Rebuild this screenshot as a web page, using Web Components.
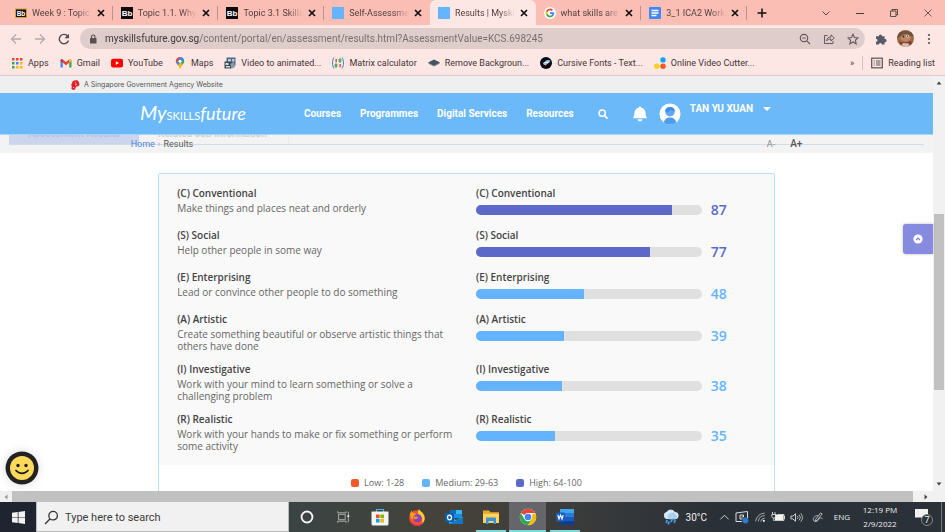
<!DOCTYPE html>
<html lang="en">
<head>
<meta charset="utf-8">
<title>Results | MySkillsFuture</title>
<style>
html,body{height:100%;margin:0}
body{font-family:Roboto,"Liberation Sans",sans-serif;font-size:9px;color:#3c3638;overflow:hidden}
</style>
</head>
<body>
<desktop-screen></desktop-screen>
<script>
const BASE = `*{box-sizing:border-box}button{font:inherit;color:inherit;background:none;border:0;padding:0;margin:0;display:flex;align-items:center;justify-content:center}a{color:inherit;text-decoration:none}svg{display:block;flex:none}ul{list-style:none;margin:0;padding:0}`;
function define(tag, css, html) {
  customElements.define(tag, class extends HTMLElement {
    constructor() {
      super();
      this.attachShadow({mode: 'open'});
    }
    connectedCallback() {
      const t = document.createElement('template');
      t.innerHTML = `<style>${BASE}${css}</style>` + (typeof html === 'function' ? html(this) : html);
      this.shadowRoot.replaceChildren(t.content.cloneNode(true));
    }
  });
}

const chromeLogo = `<circle cx="12" cy="12" r="11" fill="#fff"/><path d="M12 12 2.5 6.5A11 11 0 0 1 21.500 6.500H12z" fill="#ea4335"/><path d="M12 12 21.500 6.500A11 11 0 0 1 12 23l4.800-8.300z" fill="#fbbc05"/><path d="M12 12l4.800 2.700L12 23A11 11 0 0 1 2.500 6.500L7.200 14.700z" fill="#34a853"/><circle cx="12" cy="12" r="5.500" fill="#fff"/><circle cx="12" cy="12" r="4.400" fill="#4285f4"/>`;
const ICONS = {
  goldbb: ['0 0 12 12', `<rect x="0.500" y="2" width="11" height="8.500" fill="#111" stroke="#d4a22c"/><text x="6" y="8.800" font-size="6.500" font-weight="700" fill="#fff" text-anchor="middle">Bb</text>`],
  bb: ['0 0 12 12', `<rect width="12" height="12" fill="#0b0b0b"/><text x="6" y="9" font-size="8" font-weight="700" fill="#fff" text-anchor="middle">Bb</text>`],
  blue: ['0 0 12 12', `<rect width="12" height="12" fill="#64b5fd"/>`],
  google: ['0 0 24 24', `<circle cx="12" cy="12" r="12" fill="#fff"/><g transform="translate(2.400 2.400) scale(.8)"><path fill="#4285f4" d="M22.600 12.300c0-.8-.1-1.500-.2-2.300H12v4.300h6c-.3 1.400-1.100 2.500-2.200 3.300v2.800h3.600c2-1.900 3.200-4.700 3.200-8.100z"/><path fill="#34a853" d="M12 23c3 0 5.500-1 7.300-2.700l-3.600-2.800c-1 .7-2.200 1.100-3.700 1.100-2.900 0-5.300-1.900-6.200-4.500H2.200v2.800A11 11 0 0 0 12 23z"/><path fill="#fbbc05" d="M5.800 14.100a6.600 6.600 0 0 1 0-4.200V7.100H2.200a11 11 0 0 0 0 9.900z"/><path fill="#ea4335" d="M12 5.400c1.600 0 3.100.6 4.200 1.600l3.200-3.200A11 11 0 0 0 2.200 7.100l3.600 2.800C6.700 7.300 9.100 5.400 12 5.400z"/></g>`],
  docs: ['0 0 12 12', `<rect width="12" height="12" rx="1.200" fill="#4285f4"/><path d="M2.500 3.500h7M2.500 6h7M2.500 8.500h5" stroke="#fff" stroke-width="1.300"/>`],
  close: ['0 0 10 10', `<path d="M2 2l6 6M8 2l-6 6" stroke="#111" stroke-width="1.700"/>`],
  plus: ['0 0 10 10', `<path d="M5 .5v9M.5 5h9" stroke="#111" stroke-width="1.500"/>`],
  chev: ['0 0 10 10', `<path d="M1.500 3.500 5 7l3.500-3.500" fill="none" stroke="#5a4a4a"/>`],
  min: ['0 0 10 10', `<path d="M1 5.500h8" stroke="#443"/>`],
  restore: ['0 0 10 10', `<path d="M1.500 3h5.500v5.500H1.500zM3 3V1.500h5.500V7H7" fill="none" stroke="#443" stroke-width=".9"/>`],
  wclose: ['0 0 10 10', `<path d="M1.500 1.500l7 7M8.500 1.500l-7 7" stroke="#443" stroke-width=".8"/>`],
  back: ['0 0 12 12', `<path d="M11 6H2M6 1.500 1.500 6 6 10.500" fill="none" stroke="#b7a9a9" stroke-width="1.300"/>`],
  fwd: ['0 0 12 12', `<path d="M1 6h9M6 1.500 10.500 6 6 10.500" fill="none" stroke="#b7a9a9" stroke-width="1.300"/>`],
  reload: ['0 0 12 12', `<path d="M9.800 3.300A4.700 4.700 0 1 0 10.500 7.500" fill="none" stroke="#55494a" stroke-width="1.400"/><path d="M11 .8v4.500H6.500z" fill="#55494a"/>`],
  lock: ['0 0 10 10', `<rect x="2" y="4" width="6.500" height="5.500" rx=".6" fill="#5a5052"/><path d="M3.500 4V2.700a1.750 1.750 0 0 1 3.500 0V4" fill="none" stroke="#5a5052" stroke-width="1.100"/>`],
  zoomout: ['0 0 12 12', `<circle cx="5" cy="5" r="3.700" fill="none" stroke="#655a5c" stroke-width="1.200"/><path d="M7.800 7.800 11 11M3.300 5h3.400" stroke="#655a5c" stroke-width="1.200"/>`],
  share: ['0 0 12 12', `<path d="M4.500 2.500H1.500v8h8.500V8M3.500 8c.3-2.800 2-4 4.500-4V1.800L11.300 5 8 8V6C6 6 4.700 6.500 3.500 8z" fill="none" stroke="#655a5c"/>`],
  star: ['0 0 12 12', `<path d="M6 1.200l1.500 3.300 3.600.4-2.700 2.400.8 3.500L6 9l-3.200 1.800.8-3.500L.9 4.900l3.600-.4z" fill="none" stroke="#655a5c" stroke-width="1.100"/>`],
  puzzle: ['0 0 12 12', `<path d="M1 3.200h2.800a1.600 1.600 0 1 1 3.200 0H9.600V6a1.600 1.600 0 1 1 0 3.100v2.400H6.900a1.500 1.500 0 0 0-3 0H1V8.800a1.500 1.500 0 0 0 0-3z" fill="#595a66"/>`],
  face: ['0 0 16 16', `<defs><clipPath id="f"><circle cx="8" cy="8" r="8"/></clipPath></defs><g clip-path="url(#f)"><path d="M0 0h16v16H0z" fill="#9a6a48"/><path d="M0 4c3-4 13-4 16 0v2c-4-1-6 1-9 1S2 5 0 8z" fill="#70513c"/><ellipse cx="8" cy="7.500" rx="5" ry="3.500" fill="#b98761"/><circle cx="6" cy="6" r=".9" fill="#3a2c25"/><circle cx="10" cy="5.800" r="1.400" fill="#d8c7b2"/><circle cx="10" cy="5.800" r=".6" fill="#3a2c25"/><path d="M2 11c4 1 8 1 11-1l1 3-6 1-5-1z" fill="#8c3127"/><path d="M5 12.500h6V16H5z" fill="#d8c0b2"/></g>`],
  dots: ['0 0 12 12', `<circle cx="6" cy="2" r="1.100" fill="#554"/><circle cx="6" cy="6" r="1.100" fill="#554"/><circle cx="6" cy="10" r="1.100" fill="#554"/>`],
  apps: ['0 0 12 12', `<g><path d="M1 1h2.500v2.500H1zM5 1h2.500v2.500H5zM9 1h2.500v2.500H9z" fill="#ea4335"/><path d="M1 5h2.500v2.500H1z" fill="#34a853"/><path d="M5 5h2.500v2.500H5z" fill="#4285f4"/><path d="M9 5h2.500v2.500H9zM9 9h2.500v2.500H9zM5 9h2.500v2.500H5z" fill="#fbbc05"/><path d="M1 9h2.500v2.500H1z" fill="#34a853"/></g>`],
  gmail: ['0 0 12 12', `<path d="M.5 3v7.500h2.300V5.500z" fill="#4285f4"/><path d="M11.500 3v7.500H9.200V5.500z" fill="#34a853"/><path d="M2.800 2.500 6 5l3.200-2.500v3.200L6 8.200 2.800 5.700z" fill="#ea4335"/><path d="M.5 3.200A1.400 1.400 0 0 1 2.800 2.400v3.300L.5 4z" fill="#c5221f"/><path d="M11.500 3.200A1.400 1.400 0 0 0 9.200 2.400v3.300L11.500 4z" fill="#fbbc04"/>`],
  youtube: ['0 0 12 12', `<rect y="1.800" width="12" height="8.600" rx="2" fill="#f00"/><path d="M4.800 4.200v3.800L8 6.100z" fill="#fff"/>`],
  maps: ['0 0 12 12', `<path d="M6 0a4.200 4.200 0 0 1 4.200 4.200C10.200 7 7.200 8 6 12z" fill="#34a853"/><path d="M1.900 5C2.400 7.500 5 8 6 12c.5-2 1.500-3.200 2.500-4.500L6 4z" fill="#fbbc04"/><path d="M6 0a4.200 4.200 0 0 0-4.200 4.200c0 .6.100 1.200.5 1.900L6 4.200z" fill="#ea4335"/><path d="M6 0a4.200 4.200 0 0 1 3.600 2.100L4 8.200 2.300 6.100z" fill="#4285f4"/><circle cx="6" cy="4.200" r="1.500" fill="#fff"/>`],
  video: ['0 0 12 12', `<rect x="2.500" y=".5" width="9" height="8" fill="#52657e"/><path d="M4 2h3v3H4zM8 2h2.500v2.500H8z" fill="#b3c9df"/><rect x=".5" y="4.500" width="7" height="7" fill="#3d4650"/><path d="M1.500 6h3v2h-3zM2 9h4v1.500H2z" fill="#d5dde5"/><path d="M6 7l4-2 1 5-3 1.500z" fill="#8799a8"/>`],
  matrix: ['0 0 12 12', `<path d="M2 .5C0 3.500 0 8.500 2 11.500M10 .5c2 3 2 8 0 11" fill="none" stroke="#3a7fc2"/><path d="M3.500 2h1.300v3.200H3.500z" fill="#d33"/><path d="M7.200 2h1.600v3H7.200z" fill="none" stroke="#2a9a42"/><path d="M3.200 7h1.600v3H3.200z" fill="none" stroke="#2a9a42"/><path d="M7.500 7h1.300v3.200H7.500z" fill="#d33"/>`],
  remove: ['0 0 12 12', `<path d="M0 6.500 6 3.500l6 3-6 3z" fill="#7c8894"/><path d="M0 5.500 6 2.500l6 3-6 3z" fill="#47535f"/>`],
  cursive: ['0 0 12 12', `<circle cx="6" cy="6" r="6" fill="#0a0a12"/><path d="M2.500 6.500 7 3l3.500.5L9 6z" fill="#7fd9ee"/><path d="M3 7l6-1.500L5.500 8.500z" fill="#f0a0c8"/><path d="M3.500 6.300l5-1" stroke="#fff"/>`],
  cutter: ['0 0 12 12', `<circle cx="9" cy="2.900" r="2.700" fill="#03a9f4"/><circle cx="9" cy="9.200" r="2.700" fill="#ff5722"/><circle cx="2.700" cy="9.200" r="2.700" fill="#ffd21f"/>`],
  list: ['0 0 12 12', `<rect x=".7" y="1.200" width="10.600" height="9.600" fill="none" stroke="#5a5052" stroke-width="1.200"/><path d="M2.700 4h1M5 4h4.500M2.700 6h1M5 6h4.500M2.700 8h1M5 8h4.500" stroke="#5a5052"/>`],
  lion: ['0 0 10 10', `<path d="M2.500 1.500C4 .3 6.500 0 8 .8l1 1.700.5 2.300-1.200 1.400-1.800.3-.8 1L5 9.500 3 10 1.200 8.500 2 6.500 1 5l.8-1.300z" fill="#e02127"/><path d="M4.800 2.700l1.500.5M5 5l2-.4M3 7.200l1 .7" stroke="#fff" stroke-width=".7"/>`],
  search: ['0 0 10 10', `<circle cx="4.200" cy="4.200" r="3.100" fill="none" stroke="#fff" stroke-width="1.500"/><path d="M6.500 6.500 9 9.200" stroke="#fff" stroke-width="1.800" stroke-linecap="round"/>`],
  bell: ['0 0 14 16', `<path d="M7 .5c.6 0 1 .4 1.200.9C11 2 12.300 4 12.600 7c0 2 .3 3.200 1.200 4.500v.7H.2v-.7C1.100 10.200 1.400 9 1.400 7 1.700 4 3 2 5.800 1.400 6 .9 6.400.5 7 .5zM4.600 13.200h4.800a2.400 2.400 0 0 1-4.800 0z" fill="#fff"/>`],
  user: ['0 0 22 22', `<defs><clipPath id="u"><circle cx="11" cy="11" r="10.500"/></clipPath></defs><circle cx="11" cy="11" r="10.500" fill="#fff"/><g clip-path="url(#u)"><path d="M4.500 22c0-5 2.500-7.500 6.500-7.500s6.500 2.500 6.500 7.500z" fill="#4f9bec"/></g><circle cx="11" cy="8.700" r="4.800" fill="#62a9ef"/><path d="M11 3.900a4.800 4.800 0 0 0-4.800 4.800c3 .5 5.500-.8 5.800-2.500 1 1.500 2 2.200 3.800 2.200A4.800 4.800 0 0 0 11 3.900z" fill="#3f8ce6"/>`],
  caret: ['0 0 8 6', `<path d="M0 1h8L4 5z" fill="#fff"/>`],
  up: ['0 0 10 10', `<circle cx="5" cy="5" r="4.600" fill="#fff"/><path d="M3 6l2-2 2 2" fill="none" stroke="#777ddb" stroke-width="1.100"/>`],
  smile: ['0 0 34 34', `<circle cx="17" cy="17" r="16.500" fill="#222"/><circle cx="17" cy="17" r="12" fill="#ffd95c"/><circle cx="13" cy="14.500" r="1.700" fill="#1c1c1c"/><circle cx="21" cy="14.500" r="1.700" fill="#1c1c1c"/><path d="M11 19.500c3 3.700 9 3.700 12 0" fill="none" stroke="#1c1c1c" stroke-width="1.700" stroke-linecap="round"/>`],
  sup: ['0 0 6 6', `<path d="M.5 4.500h5L3 1.500z" fill="#444"/>`],
  sdown: ['0 0 6 6', `<path d="M.5 1.500h5L3 4.500z" fill="#444"/>`],
  sleft: ['0 0 6 6', `<path d="M4.500 .5v5L1.500 3z" fill="#999"/>`],
  sright: ['0 0 6 6', `<path d="M1.500 .5v5L4.500 3z" fill="#444"/>`],
  win: ['0 0 12 12', `<path d="M0 1.700 5.300 1v4.700H0zM6 .9 12 0v5.700H6zM0 6.300h5.300V11L0 10.300zM6 6.300h6V12l-6-.9z" fill="#f2f2f2"/>`],
  glass: ['0 0 14 14', `<circle cx="8.500" cy="5.300" r="4" fill="none" stroke="#333" stroke-width="1.200"/><path d="M5.700 8.200 1 13" stroke="#333" stroke-width="1.200"/>`],
  cortana: ['0 0 18 18', `<circle cx="9" cy="9" r="4.900" fill="none" stroke="#f4f4f4" stroke-width="1.700"/>`],
  taskview: ['0 0 18 18', `<path d="M4 6h7.500v6H4zM3 2.500v1.800h9.500V2.500M3 15.500v-1.800h9.500v1.800M15 3v12" fill="none" stroke="#b8b8b8"/><path d="M14 7h2v2h-2z" fill="#eee"/>`],
  store: ['0 0 18 18', `<path d="M5.500 4V1.500h7V4" fill="none" stroke="#38b6ea" stroke-width="1.200"/><path d="M.5 3.500h17V16a1.500 1.500 0 0 1-1.500 1.500H2A1.500 1.500 0 0 1 .5 16z" fill="#f4f4f4"/><path d="M5 6.500h3.600v3.600H5z" fill="#f25022"/><path d="M9.400 6.500H13v3.600H9.400z" fill="#7fba00"/><path d="M5 10.900h3.600v3.600H5z" fill="#00a4ef"/><path d="M9.400 10.900H13v3.600H9.400z" fill="#ffb900"/>`],
  firefox: ['0 0 18 18', `<circle cx="9" cy="10" r="7.800" fill="#f9552c"/><path d="M11 1c.5 2 3 3 4.500 5.500 2.500 4 .5 8.500-2.500 10.300C15 13 15 9 12 7.500 9 6 10 3 11 1z" fill="#ffcf2e"/><path d="M1.700 7C2 5 3 3.500 4 2.500c0 1.500.5 2 1.500 2.500L9 6.500l-3 2L4 12z" fill="#ff9a1f"/><circle cx="9.500" cy="10.200" r="4" fill="#8041c9"/><path d="M6 8.500c1.500-.5 3 .8 4.500.5-1 2-2.500 2.500-4.500 2z" fill="#ff8b22"/><path d="M2 12c3 6 11 6 13.500 1-1 4-3.500 5-6.500 5s-6-2-7-6z" fill="#e52b55"/>`],
  outlook: ['0 0 18 18', `<path d="M5 2h12v8H5z" fill="#1490df"/><path d="M5 2h6v4H5z" fill="#0f6cbd"/><path d="M11 2h6v4h-6z" fill="#35b8f1"/><path d="M4 8.500 11 12l7-3.500V16H4z" fill="#28a8ea"/><path d="M4 16l14-7v7z" fill="#1277c8"/><rect x="0" y="5" width="9" height="9" rx="1" fill="#0a5fb4"/><ellipse cx="4.500" cy="9.500" rx="2" ry="2.300" fill="none" stroke="#fff" stroke-width="1.300"/>`],
  explorer: ['0 0 18 18', `<path d="M1 2.500h6l1.500 1.800H17V15H1z" fill="#e9a92b"/><path d="M1 5.800h16V15H1z" fill="#ffd45e"/><path d="M4 9.500h10V16h-2.500v-3h-5v3H4z" fill="#3a93d8"/>`],
  chrome: ['0 0 24 24', chromeLogo],
  word: ['0 0 18 18', `<rect x="4" y="1" width="14" height="16" rx="1" fill="#2b7cd3"/><path d="M4 1h14v4H4z" fill="#41a5ee"/><path d="M4 9h14v4H4z" fill="#185abd"/><path d="M4 13h14v4H4z" fill="#103f91"/><rect y="4.500" width="9" height="9" rx="1" fill="#185abd"/><path d="M1.800 7l1.200 4 1.500-4L6 11l1.200-4" fill="none" stroke="#fff" stroke-width="1.100"/>`],
  weather: ['0 0 16 16', `<path d="M4 10a3.600 3.600 0 0 1-.5-7A4.800 4.800 0 0 1 12 3a3.600 3.600 0 0 1 0 7.200z" fill="#d7e8f7"/><path d="M6 10.200a3 3 0 0 1 .5-5.500A4 4 0 0 1 13 6a2.300 2.300 0 0 1-.5 4.200z" fill="#a9cfee"/><path d="M4 11.500l-.6 1.800M12 11.500l-.6 1.800M9 11l-.8 1.500M6 13l-.6 1.800" stroke="#3ba3ee" stroke-width="1.700" stroke-linecap="round"/>`],
  trayup: ['0 0 12 12', `<path d="M1.500 8 6 3.500 10.500 8" fill="none" stroke="#ddd"/>`],
  cast: ['0 0 14 14', `<path d="M1 3 12.500 1.500V8M1 3v8.500h6" fill="none" stroke="#ddd"/><path d="M8.500 5H5v4h2.500M6.500 7h2V5" fill="none" stroke="#ddd"/><circle cx="10.500" cy="10.500" r="2.900" fill="#2b7cd3"/>`],
  wifi: ['0 0 14 14', `<path d="M2 12A10.500 10.500 0 0 1 12.500 2.500M5 12.200A8 8 0 0 1 12.500 5.300M7.800 12.400A5 5 0 0 1 12.500 8.300" fill="none" stroke="#bbb"/><circle cx="11.500" cy="11.500" r="1.300" fill="#eee"/>`],
  battery: ['0 0 14 14', `<rect x="4" y="4.500" width="8.500" height="5.500" fill="#f2f2f2"/><path d="M3.500 10.500H13v-6H7M13.500 6v3M1.500 2v2.500M4 2v2.500M.8 4.500h4v1.700a2 2 0 0 1-4 0zM2.800 8v3" fill="none" stroke="#ddd" stroke-width=".9"/>`],
  volume: ['0 0 14 14', `<path d="M1 5.500h2L6 3v8L3 8.500H1z" fill="none" stroke="#ddd"/><path d="M8 5.500a2 2 0 0 1 0 3M9.800 4a4.300 4.300 0 0 1 0 6M11.500 2.500a6.300 6.300 0 0 1 0 9" fill="none" stroke="#ccc" stroke-width=".9"/>`],
  pen: ['0 0 14 14', `<path d="M5 9l5.500-7L12 3.300 6.500 10 4.500 10.800zM8 5c-3-.5-6 2-5.500 4.500S7 12 8 9.500 11 7 12.500 8.500" fill="none" stroke="#ccc" stroke-width=".9"/>`]
};
define('ui-icon', `:host{display:block;flex:none}svg{font-family:"Liberation Sans",sans-serif}`, el => {
  const [vb, body] = ICONS[el.getAttribute('name')];
  const w = el.getAttribute('w') || 12, h = el.getAttribute('h') || w;
  return `<svg viewBox="${vb}" width="${w}" height="${h}" aria-hidden="true">${body}</svg>`;
});

/* Browser frame */
define('browser-tab', `:host{flex:1 1 0;min-width:0;display:flex;align-items:center;height:25px;padding:0 7px 0 8px;position:relative}
:host([active]){background:#fde7e5;border-radius:6px 6px 0 0}
.sep{position:absolute;right:0;top:6px;width:1px;height:14px;background:#b8928d}
a{flex:1;min-width:0;display:flex;align-items:center;gap:5px;font-size:9px;line-height:14px}
span{flex:1;min-width:0;overflow:hidden;white-space:nowrap;-webkit-mask-image:linear-gradient(90deg,#000 75%,transparent)}
button{width:10px;height:10px;margin-left:4px}`,
  el => `<a href="#"><ui-icon name="${el.getAttribute('icon')}"></ui-icon><span><slot></slot></span></a><button aria-label="Close tab"><ui-icon name="close" w="10"></ui-icon></button>${el.hasAttribute('sep') ? '<i class="sep"></i>' : ''}`);

define('tab-strip', `:host{display:flex;align-items:center;background:#fabeb5;padding-left:7px;height:25px;color:#54403f}
nav{display:flex;flex:1;min-width:0;max-width:740px}
.new{width:10px;height:10px;margin-left:10px}
.win{margin-left:auto;display:flex;height:22px;align-items:center}
.win button{width:34px;height:22px}`,
`<nav><browser-tab icon="goldbb" sep>Week 9 : Topic</browser-tab><browser-tab icon="bb" sep>Topic 1.1. Why</browser-tab><browser-tab icon="bb" sep>Topic 3.1 Skills</browser-tab><browser-tab icon="blue">Self-Assessmen</browser-tab><browser-tab icon="blue" active>Results | Myskil</browser-tab><browser-tab icon="google" sep>what skills are n</browser-tab><browser-tab icon="docs" sep>3_1 ICA2 Works</browser-tab></nav>
<button class="new" aria-label="New tab"><ui-icon name="plus" w="10"></ui-icon></button>
<div class="win"><button aria-label="Search tabs"><ui-icon name="chev" w="10"></ui-icon></button><button aria-label="Minimize"><ui-icon name="min" w="10"></ui-icon></button><button aria-label="Restore"><ui-icon name="restore" w="10"></ui-icon></button><button aria-label="Close"><ui-icon name="wclose" w="10"></ui-icon></button></div>`);

define('address-bar', `:host{display:flex;align-items:center;background:#fde7e5;height:27px;padding:0 4px}
:host>button,button{width:24px;height:24px}
.box{flex:1;min-width:0;display:flex;align-items:center;height:21px;border-radius:11px;background:#decdcb;margin:0 4px;padding-left:8px}
input{flex:1;min-width:0;border:0;outline:0;padding:0;margin-left:7px;height:16px;font:10px/16px Roboto,sans-serif;color:#6e6263;background:linear-gradient(90deg,#3a3234 95px,#756a6b 95px);-webkit-background-clip:text;-webkit-text-fill-color:transparent}`,
`<button aria-label="Back"><ui-icon name="back"></ui-icon></button><button aria-label="Forward"><ui-icon name="fwd"></ui-icon></button><button aria-label="Reload"><ui-icon name="reload"></ui-icon></button>
<div class="box"><ui-icon name="lock" w="10"></ui-icon><input aria-label="Address" value="myskillsfuture.gov.sg/content/portal/en/assessment/results.html?AssessmentValue=KCS.698245"><button aria-label="Zoom"><ui-icon name="zoomout"></ui-icon></button><button aria-label="Share"><ui-icon name="share"></ui-icon></button><button aria-label="Bookmark"><ui-icon name="star"></ui-icon></button></div>
<button aria-label="Extensions"><ui-icon name="puzzle"></ui-icon></button><button aria-label="Profile"><ui-icon name="face" w="17"></ui-icon></button><button aria-label="Menu"><ui-icon name="dots"></ui-icon></button>`);

define('book-mark', `:host{display:block;flex:none}a{display:flex;align-items:center;gap:5px;line-height:14px;white-space:nowrap}`,
  el => `<a href="#"><ui-icon name="${el.getAttribute('icon')}"></ui-icon><slot></slot></a>`);
define('bookmark-bar', `:host{display:flex;align-items:center;gap:11px;height:24px;background:#fde7e5;border-bottom:1px solid #dccbca;padding:0 10px 2px 11px;color:#3f3536}
.more{margin-left:auto}.r{border-left:1px solid #d3c3c2;padding-left:8px}div{display:flex;align-items:center;gap:8px}`,
`<book-mark icon="apps">Apps</book-mark><book-mark icon="gmail">Gmail</book-mark><book-mark icon="youtube">YouTube</book-mark><book-mark icon="maps">Maps</book-mark><book-mark icon="video">Video to animated...</book-mark><book-mark icon="matrix">Matrix calculator</book-mark><book-mark icon="remove">Remove Backgroun...</book-mark><book-mark icon="cursive">Cursive Fonts - Text...</book-mark><book-mark icon="cutter">Online Video Cutter...</book-mark>
<div class="more"><button aria-label="More bookmarks">»</button><book-mark class="r" icon="list">Reading list</book-mark></div>`);

/* Site */
define('gov-banner', `:host{display:flex;align-items:center;gap:4px;height:17px;background:#efefef;padding-left:70px;font:7px/10px Inter,sans-serif;color:#555}`,
`<ui-icon name="lion" w="10"></ui-icon><span>A Singapore Government Agency Website</span>`);

define('site-logo', `:host{display:block}a{display:flex;align-items:baseline;color:#fff;line-height:24px;font-family:Lato,sans-serif;font-weight:400}
.s{font-style:italic;font-size:20px}.k{font-size:11px}.f{font-style:italic;font-size:18px}`,
`<a href="#"><span class="s">My</span><span class="k">SKILLS</span><span class="f">future</span></a>`);

define('site-header', `:host{display:block;background:#6bb9f9;color:#fff;font-weight:700;font-size:10px;border-bottom:1px solid #a9d4fa}
.in{width:70%;margin:0 auto;height:41px;display:flex;align-items:center}
nav{display:flex;gap:19px;margin-left:auto;line-height:14px;white-space:nowrap}
.search{margin-left:24px}.bell{margin-left:25px}.user{margin-left:12px}
.name{margin:0 22px 10px 9px;display:flex;align-items:center;gap:10px;line-height:14px;white-space:nowrap}`,
`<div class="in"><site-logo></site-logo><nav><a href="#">Courses</a><a href="#">Programmes</a><a href="#">Digital Services</a><a href="#">Resources</a></nav>
<button class="search" aria-label="Search"><ui-icon name="search" w="10"></ui-icon></button><button class="bell" aria-label="Notifications"><ui-icon name="bell" w="14" h="16"></ui-icon></button><ui-icon class="user" name="user" w="22"></ui-icon><button class="name">TAN YU XUAN <ui-icon name="caret" w="8" h="6"></ui-icon></button></div>`);

define('crumb-bar', `:host{display:block;position:relative;background:#f3f3f3;height:18px}
.ghost{position:absolute;left:9px;right:9px;top:0;height:10px;border-bottom:1px solid #d3daea;overflow:hidden;display:flex;align-items:flex-end;font:700 10px/12px Roboto,sans-serif;white-space:nowrap}
.ghost span{padding:0 19px 4px;color:#cfcfcf}
.ghost .on{background:#cbd6ec;color:#b3c2e3;width:130px;text-align:center;padding:0 0 4px}
.ghost .two{border-right:1px solid #eaeaea;width:150px}
.crumbs{position:relative;display:flex;align-items:center;width:72%;margin:0 auto;height:17px;color:#5b5b5b;line-height:14px}
a{color:#4f86e0}.crumbs i{margin:0 3px;color:#aaa;font-style:normal}
.size{margin-left:auto;display:flex;gap:15px;align-items:center}
.size button{line-height:14px;color:#888}.size .p{font-size:10px;font-weight:500;color:#555}`,
`<div class="ghost"><span class="on">Assessment Results</span><span class="two">Related Job Information</span></div>
<div class="crumbs"><a href="#">Home</a><i>›</i><span>Results</span><div class="size"><button>A-</button><button class="p">A+</button></div></div>`);

define('score-row', `:host{display:grid;grid-template-columns:minmax(0,298fr) minmax(0,280fr);font:10px/12px "Open Sans",sans-serif;color:#666;--c:#63b4fd}
:host([high]){--c:#5c69c9}
h3{margin:0;font:600 10px/14px "Open Sans",sans-serif;color:#444}
p{margin:2px 16px 0 0}
.m{display:flex;align-items:center;height:16px;margin-top:2px}
progress{-webkit-appearance:none;appearance:none;flex:1;min-width:0;height:10px;border:0;border-radius:5px;overflow:hidden;background:#e0e0e0}
progress::-webkit-progress-bar{background:#e0e0e0}
progress::-webkit-progress-value{background:var(--c)}
b{flex:none;width:46px;margin-left:9px;font:600 14px/16px "Open Sans",sans-serif;color:var(--c)}`,
  el => { const n = el.getAttribute('name'), v = el.getAttribute('value');
    return `<div><h3>${n}</h3><p><slot></slot></p></div><div><h3>${n}</h3><div class="m"><progress max="100" value="${v}" aria-label="${n}"></progress><b>${v}</b></div></div>`; });

define('score-legend', `:host{display:block;font:9px/12px "Open Sans",sans-serif;color:#666}
ul{display:flex;justify-content:center;gap:18px;padding:12px 0 24px}
li{display:flex;align-items:center;gap:5px}i{width:8px;height:8px;border-radius:2px}`,
`<ul><li><i style="background:#f4592b"></i>Low: 1-28</li><li><i style="background:#63b4fd"></i>Medium: 29-63</li><li><i style="background:#5c69c9"></i>High: 64-100</li></ul>`);

define('result-panel', `:host{display:block;width:66.1%;margin:20px auto 0;border:1px solid #b9defc;border-radius:2px}
.rows{background:#f9f9f9;padding:12px 17px 13px 18px;display:grid;gap:10px}`,
`<div class="rows"><slot></slot></div><score-legend></score-legend>`);

define('scroll-bar', `:host{display:flex;flex-direction:column;align-items:center;background:#f1f1f1;width:12px;padding:4px 0}
i{width:10px;background:#c1c1c1;flex:175}.a{flex:127}.z{flex:90}
:host([flat]){flex-direction:row;width:auto;height:11px;padding:0 3px}
:host([flat]) i{width:auto;height:11px;flex:1;margin:0 10px 0 3px}
:host([flat]) .a,:host([flat]) .z{display:none}
:host([flat]) .e{margin-right:13px}`,
  el => { const f = el.hasAttribute('flat'); return `<ui-icon name="${f ? 'sleft' : 'sup'}" w="6"></ui-icon><span class="a"></span><i></i><span class="z"></span><ui-icon class="e" name="${f ? 'sright' : 'sdown'}" w="6"></ui-icon>`; });

define('web-page', `:host{flex:1;min-height:0;display:flex;position:relative;overflow:hidden;background:#fff}
main{flex:1;min-width:0;overflow:hidden}
.up{position:absolute;right:12px;top:148px;width:30px;height:30px;background:#868be0;border-radius:3px 0 0 3px;box-shadow:0 0 3px #8889}
.smile{position:absolute;left:5px;bottom:6px;border-radius:50%;box-shadow:0 0 10px #0002}`,
`<main><gov-banner></gov-banner><site-header></site-header><crumb-bar></crumb-bar>
<result-panel>
<score-row name="(C) Conventional" value="87" high>Make things and places neat and orderly</score-row>
<score-row name="(S) Social" value="77" high>Help other people in some way</score-row>
<score-row name="(E) Enterprising" value="48">Lead or convince other people to do something</score-row>
<score-row name="(A) Artistic" value="39">Create something beautiful or observe artistic things that others have done</score-row>
<score-row name="(I) Investigative" value="38">Work with your mind to learn something or solve a challenging problem</score-row>
<score-row name="(R) Realistic" value="35">Work with your hands to make or fix something or perform some activity</score-row>
</result-panel></main>
<scroll-bar></scroll-bar>
<button class="up" aria-label="Back to top"><ui-icon name="up" w="10"></ui-icon></button>
<button class="smile" aria-label="Feedback"><ui-icon name="smile" w="34"></ui-icon></button>`);

/* Taskbar */
define('task-bar', `:host{display:flex;height:30px;background:linear-gradient(90deg,#3a4444 30%,#45423a 48%,#3b3c3b 60%,#2a3037 76%,#2b3138);color:#eee}
.start{width:36px;background:#1f2430}
label{flex:1 1 0;max-width:253px;min-width:0;display:flex;align-items:center;gap:6px;background:#f1f1f1;border:1px solid #bbb;border-top:0;padding:2px 0 0 7px}
input{flex:1;min-width:0;border:0;padding:0;background:none;outline:0;font:11px/16px Roboto,sans-serif;color:#333}
input::placeholder{color:#3c3c3c;opacity:1}
.app{width:37px;height:30px;border:solid transparent;border-width:0 3px 0}
.n{width:36px}
.open{background:linear-gradient(#7fd6dc,#7fd6dc) bottom/30px 2px no-repeat;border:0}
.act{background:linear-gradient(#7fd6dc,#7fd6dc) bottom/100% 2px no-repeat #64666a;border:0}
.tray{margin-left:auto;display:flex;align-items:center;white-space:nowrap}
.tray button{height:30px;gap:7px}
.w{font-size:10px;margin-right:8px}
.i{width:18px}.pen{width:24px}.tray .lang{width:26px;font:8px/14px "Open Sans",sans-serif}
.time{width:50px;text-align:center;font:8px/14px "Open Sans",sans-serif}
.note{width:37px;border-right:1px solid #777;margin-right:3px}
.note span{position:relative;display:block;width:16px;height:18px}
.note span::before{content:"";position:absolute;left:0;top:1px;width:13px;height:10px;background:#f1f1f1;clip-path:polygon(0 0,100% 0,100% 85%,70% 85%,50% 100%,50% 85%,0 85%)}
.note b{position:absolute;left:6px;top:6px;width:12px;height:12px;border-radius:50%;border:1px solid #888;background:#2b3138;font:9px/10px Roboto,sans-serif;text-align:center}`,
`<button class="start" aria-label="Start"><ui-icon name="win" w="13"></ui-icon></button>
<label><ui-icon name="glass" w="15"></ui-icon><input aria-label="Search" placeholder="Type here to search"></label>
<button class="app n" aria-label="Cortana"><ui-icon name="cortana" w="20"></ui-icon></button><button class="app n" aria-label="Task view"><ui-icon name="taskview" w="16"></ui-icon></button><button class="app" aria-label="Store"><ui-icon name="store" w="18"></ui-icon></button><button class="app" aria-label="Firefox"><ui-icon name="firefox" w="18"></ui-icon></button><button class="app" aria-label="Outlook"><ui-icon name="outlook" w="18"></ui-icon></button><button class="app open" aria-label="Explorer"><ui-icon name="explorer" w="18"></ui-icon></button><button class="app act" aria-label="Chrome"><ui-icon name="chrome" w="18"></ui-icon></button><button class="app open" aria-label="Word"><ui-icon name="word" w="18"></ui-icon></button>
<div class="tray"><button class="w"><ui-icon name="weather" w="16"></ui-icon>30°C</button><button class="i" aria-label="Hidden icons"><ui-icon name="trayup" w="11"></ui-icon></button><button class="i" aria-label="Screen share"><ui-icon name="cast" w="14"></ui-icon></button><button class="i" aria-label="Network"><ui-icon name="wifi" w="12"></ui-icon></button><button class="i" aria-label="Battery"><ui-icon name="battery" w="14"></ui-icon></button><button class="i" aria-label="Volume"><ui-icon name="volume" w="13"></ui-icon></button><button class="pen" aria-label="Pen"><ui-icon name="pen" w="13"></ui-icon></button><button class="lang">ENG</button><div class="time">12:19 PM<br>2/9/2022</div><button class="note" aria-label="Notifications"><span><b>7</b></span></button></div>`);

define('desktop-screen', `:host{display:flex;flex-direction:column;height:100vh}`,
`<tab-strip></tab-strip><address-bar></address-bar><bookmark-bar></bookmark-bar><web-page></web-page><scroll-bar flat></scroll-bar><task-bar></task-bar>`);
</script>
</body>
</html>
